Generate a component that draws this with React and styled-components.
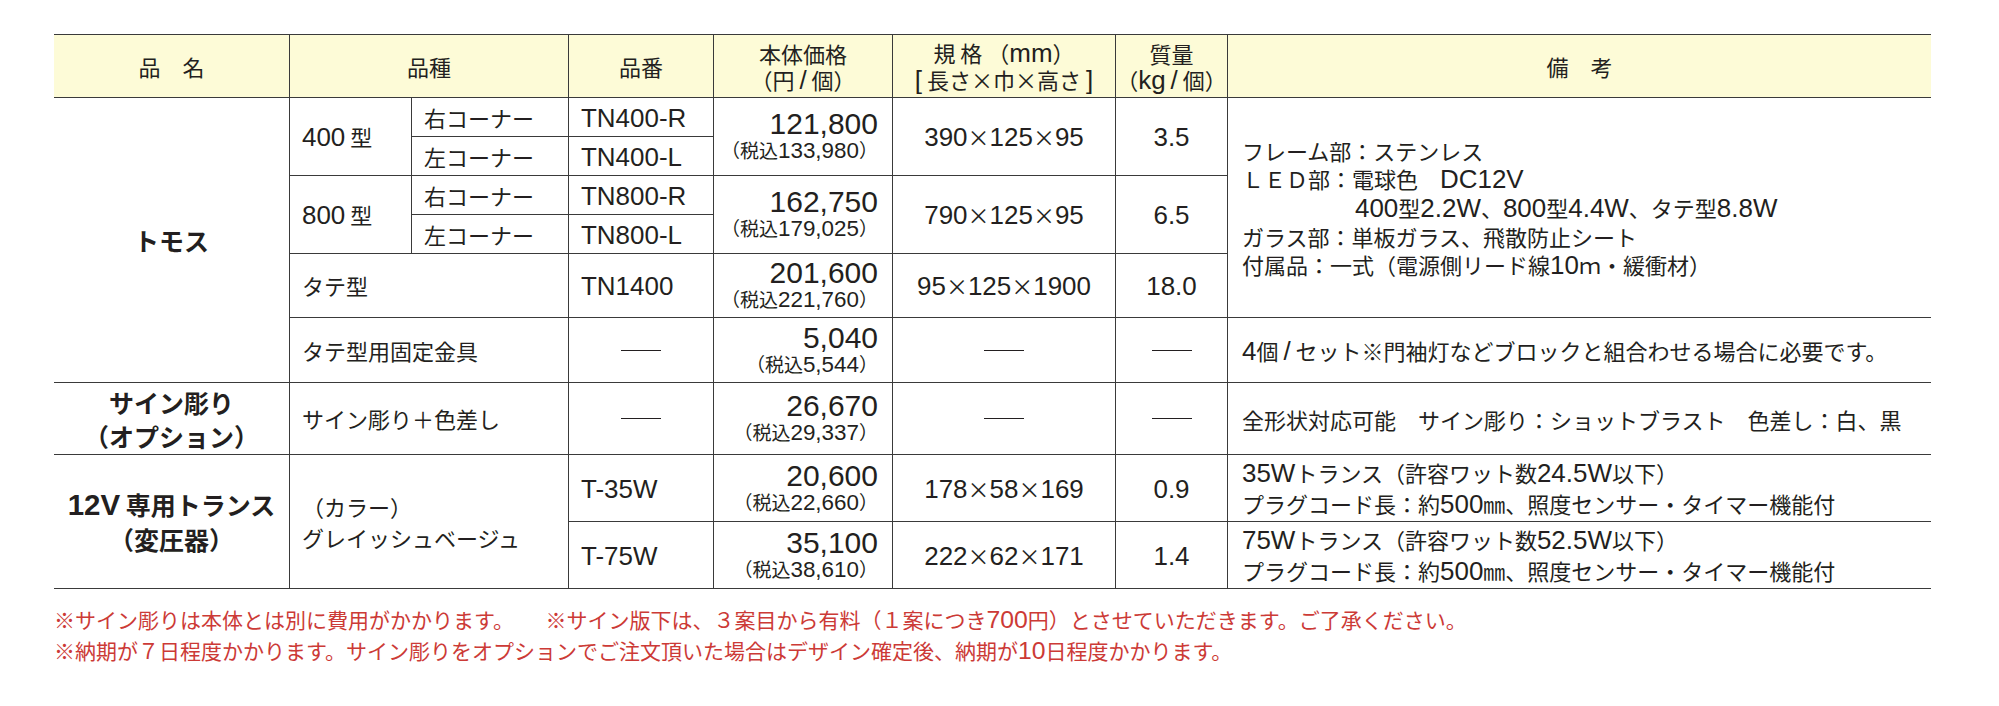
import React from 'react';
import styled, { createGlobalStyle } from 'styled-components';

const LINE = '#3a3a3a';
const INK = '#231f20';

const Global = createGlobalStyle`
  html, body { margin: 0; padding: 0; background: #ffffff; }
  body {
    font-family: "Noto Sans CJK JP", "Noto Sans", sans-serif;
    color: ${INK};
  }
`;

const Page = styled.div`
  padding: 34px 0 40px 54px;
`;

const Table = styled.div`
  display: grid;
  grid-template-columns: 235px 122px 157px 145px 179px 223px 112px 704px;
  grid-template-rows: 63px 39px 39px 39px 39px 64px 65px 72px 67px 67px;
  width: 1877px;
  border-top: 1px solid ${LINE};
  font-size: 22px;
  line-height: 28px;
`;

const Cell = styled.div`
  grid-column: ${(p) => p.$c} / span ${(p) => p.$cs || 1};
  grid-row: ${(p) => p.$r} / span ${(p) => p.$rs || 1};
  box-sizing: border-box;
  min-width: 0;
  border-bottom: 1px solid ${LINE};
  border-left: ${(p) => (p.$c === 1 ? 'none' : `1px solid ${LINE}`)};
  display: flex;
  flex-direction: column;
  justify-content: center;
  white-space: nowrap;
`;

const HeadCell = styled(Cell)`
  background: #fdfbd7;
  align-items: center;
  text-align: center;
  font-size: 22px;
  line-height: 26px;
`;

const NameCell = styled(Cell)`
  align-items: center;
  text-align: center;
  font-size: 25px;
  font-weight: 700;
  line-height: 34px;
`;

const TypeCell = styled(Cell)`
  padding-left: 12px;
  line-height: 31px;
`;

const CodeCell = styled(Cell)`
  padding-left: 12px;
`;

const MidCell = styled(Cell)`
  align-items: center;
  text-align: center;
`;

const PriceCell = styled(Cell)`
  align-items: flex-end;
  text-align: right;
  padding-right: 14px;
`;

const NoteCell = styled(Cell)`
  padding-left: 14px;
  line-height: ${(p) => p.$lh || 28}px;
`;

const Line = styled.div`
  padding-left: ${(p) => p.$indent || 0}px;
`;

const Run = styled.span`
  white-space: pre;
`;

const Lat = styled.span`
  font-family: "Liberation Sans", Arial, sans-serif;
  font-size: 1.18em;
`;

const Price = styled.div`
  font-family: "Liberation Sans", Arial, sans-serif;
  font-size: 30px;
  line-height: 28px;
`;

const Tax = styled.div`
  font-size: 19px;
  line-height: 24px;
`;

const Dash = styled.span`
  display: block;
  width: 40px;
  border-top: 1px solid ${INK};
`;

const Notes = styled.div`
  margin-top: 15px;
  color: #cc3a36;
  font-size: 21px;
  line-height: 30px;
  white-space: nowrap;
`;

const mix = (str) => (
  <Run>
    {str
      .split(/([0-9A-Za-z.,\-\/\[\]]+)/)
      .map((part, i) => (i % 2 ? <Lat key={i}>{part}</Lat> : part))}
  </Run>
);

const PriceBlock = ({ value, tax }) => (
  <>
    <Price>{value}</Price>
    <Tax>{mix(`（税込${tax}）`)}</Tax>
  </>
);

export default function App() {
  return (
    <>
      <Global />
      <Page>
        <Table>
          {/* header */}
          <HeadCell $c={1} $r={1}>品　名</HeadCell>
          <HeadCell $c={2} $cs={2} $r={1}>品種</HeadCell>
          <HeadCell $c={4} $r={1}>品番</HeadCell>
          <HeadCell $c={5} $r={1}>
            <Line>本体価格</Line>
            <Line>{mix('（円 / 個）')}</Line>
          </HeadCell>
          <HeadCell $c={6} $r={1}>
            <Line>{mix('規 格 （mm）')}</Line>
            <Line>{mix('[ 長さ×巾×高さ ]')}</Line>
          </HeadCell>
          <HeadCell $c={7} $r={1}>
            <Line>質量</Line>
            <Line>{mix('（kg / 個）')}</Line>
          </HeadCell>
          <HeadCell $c={8} $r={1}>備　考</HeadCell>

          {/* トモス */}
          <NameCell $c={1} $r={2} $rs={6}>トモス</NameCell>

          <TypeCell $c={2} $r={2} $rs={2}>{mix('400 型')}</TypeCell>
          <TypeCell $c={3} $r={2}>右コーナー</TypeCell>
          <TypeCell $c={3} $r={3}>左コーナー</TypeCell>
          <CodeCell $c={4} $r={2}>{mix('TN400-R')}</CodeCell>
          <CodeCell $c={4} $r={3}>{mix('TN400-L')}</CodeCell>
          <PriceCell $c={5} $r={2} $rs={2}>
            <PriceBlock value="121,800" tax="133,980" />
          </PriceCell>
          <MidCell $c={6} $r={2} $rs={2}>{mix('390×125×95')}</MidCell>
          <MidCell $c={7} $r={2} $rs={2}>{mix('3.5')}</MidCell>

          <NoteCell $c={8} $r={2} $rs={5}>
            <Line>フレーム部：ステンレス</Line>
            <Line>{mix('ＬＥＤ部：電球色　DC12V')}</Line>
            <Line $indent={113}>{mix('400型2.2W、800型4.4W、タテ型8.8W')}</Line>
            <Line>ガラス部：単板ガラス、飛散防止シート</Line>
            <Line>{mix('付属品：一式（電源側リード線10ｍ・緩衝材）')}</Line>
          </NoteCell>

          <TypeCell $c={2} $r={4} $rs={2}>{mix('800 型')}</TypeCell>
          <TypeCell $c={3} $r={4}>右コーナー</TypeCell>
          <TypeCell $c={3} $r={5}>左コーナー</TypeCell>
          <CodeCell $c={4} $r={4}>{mix('TN800-R')}</CodeCell>
          <CodeCell $c={4} $r={5}>{mix('TN800-L')}</CodeCell>
          <PriceCell $c={5} $r={4} $rs={2}>
            <PriceBlock value="162,750" tax="179,025" />
          </PriceCell>
          <MidCell $c={6} $r={4} $rs={2}>{mix('790×125×95')}</MidCell>
          <MidCell $c={7} $r={4} $rs={2}>{mix('6.5')}</MidCell>

          <TypeCell $c={2} $cs={2} $r={6}>タテ型</TypeCell>
          <CodeCell $c={4} $r={6}>{mix('TN1400')}</CodeCell>
          <PriceCell $c={5} $r={6}>
            <PriceBlock value="201,600" tax="221,760" />
          </PriceCell>
          <MidCell $c={6} $r={6}>{mix('95×125×1900')}</MidCell>
          <MidCell $c={7} $r={6}>{mix('18.0')}</MidCell>

          <TypeCell $c={2} $cs={2} $r={7}>タテ型用固定金具</TypeCell>
          <MidCell $c={4} $r={7}><Dash /></MidCell>
          <PriceCell $c={5} $r={7}>
            <PriceBlock value="5,040" tax="5,544" />
          </PriceCell>
          <MidCell $c={6} $r={7}><Dash /></MidCell>
          <MidCell $c={7} $r={7}><Dash /></MidCell>
          <NoteCell $c={8} $r={7}>
            {mix('4個 / セット※門袖灯などブロックと組合わせる場合に必要です。')}
          </NoteCell>

          {/* サイン彫り */}
          <NameCell $c={1} $r={8}>
            <Line>サイン彫り</Line>
            <Line>（オプション）</Line>
          </NameCell>
          <TypeCell $c={2} $cs={2} $r={8}>サイン彫り＋色差し</TypeCell>
          <MidCell $c={4} $r={8}><Dash /></MidCell>
          <PriceCell $c={5} $r={8}>
            <PriceBlock value="26,670" tax="29,337" />
          </PriceCell>
          <MidCell $c={6} $r={8}><Dash /></MidCell>
          <MidCell $c={7} $r={8}><Dash /></MidCell>
          <NoteCell $c={8} $r={8}>
            全形状対応可能　サイン彫り：ショットブラスト　色差し：白、黒
          </NoteCell>

          {/* トランス */}
          <NameCell $c={1} $r={9} $rs={2}>
            <Line>{mix('12V 専用トランス')}</Line>
            <Line>（変圧器）</Line>
          </NameCell>
          <TypeCell $c={2} $cs={2} $r={9} $rs={2}>
            <Line>（カラー）</Line>
            <Line>グレイッシュベージュ</Line>
          </TypeCell>

          <CodeCell $c={4} $r={9}>{mix('T-35W')}</CodeCell>
          <PriceCell $c={5} $r={9}>
            <PriceBlock value="20,600" tax="22,660" />
          </PriceCell>
          <MidCell $c={6} $r={9}>{mix('178×58×169')}</MidCell>
          <MidCell $c={7} $r={9}>{mix('0.9')}</MidCell>
          <NoteCell $c={8} $r={9} $lh={30}>
            <Line>{mix('35Wトランス（許容ワット数24.5W以下）')}</Line>
            <Line>{mix('プラグコード長：約500㎜、照度センサー・タイマー機能付')}</Line>
          </NoteCell>

          <CodeCell $c={4} $r={10}>{mix('T-75W')}</CodeCell>
          <PriceCell $c={5} $r={10}>
            <PriceBlock value="35,100" tax="38,610" />
          </PriceCell>
          <MidCell $c={6} $r={10}>{mix('222×62×171')}</MidCell>
          <MidCell $c={7} $r={10}>{mix('1.4')}</MidCell>
          <NoteCell $c={8} $r={10} $lh={30}>
            <Line>{mix('75Wトランス（許容ワット数52.5W以下）')}</Line>
            <Line>{mix('プラグコード長：約500㎜、照度センサー・タイマー機能付')}</Line>
          </NoteCell>
        </Table>

        <Notes>
          <Line>
            {mix('※サイン彫りは本体とは別に費用がかかります。　　※サイン版下は、３案目から有料（１案につき700円）とさせていただきます。ご了承ください。')}
          </Line>
          <Line>
            {mix('※納期が７日程度かかります。サイン彫りをオプションでご注文頂いた場合はデザイン確定後、納期が10日程度かかります。')}
          </Line>
        </Notes>
      </Page>
    </>
  );
}
